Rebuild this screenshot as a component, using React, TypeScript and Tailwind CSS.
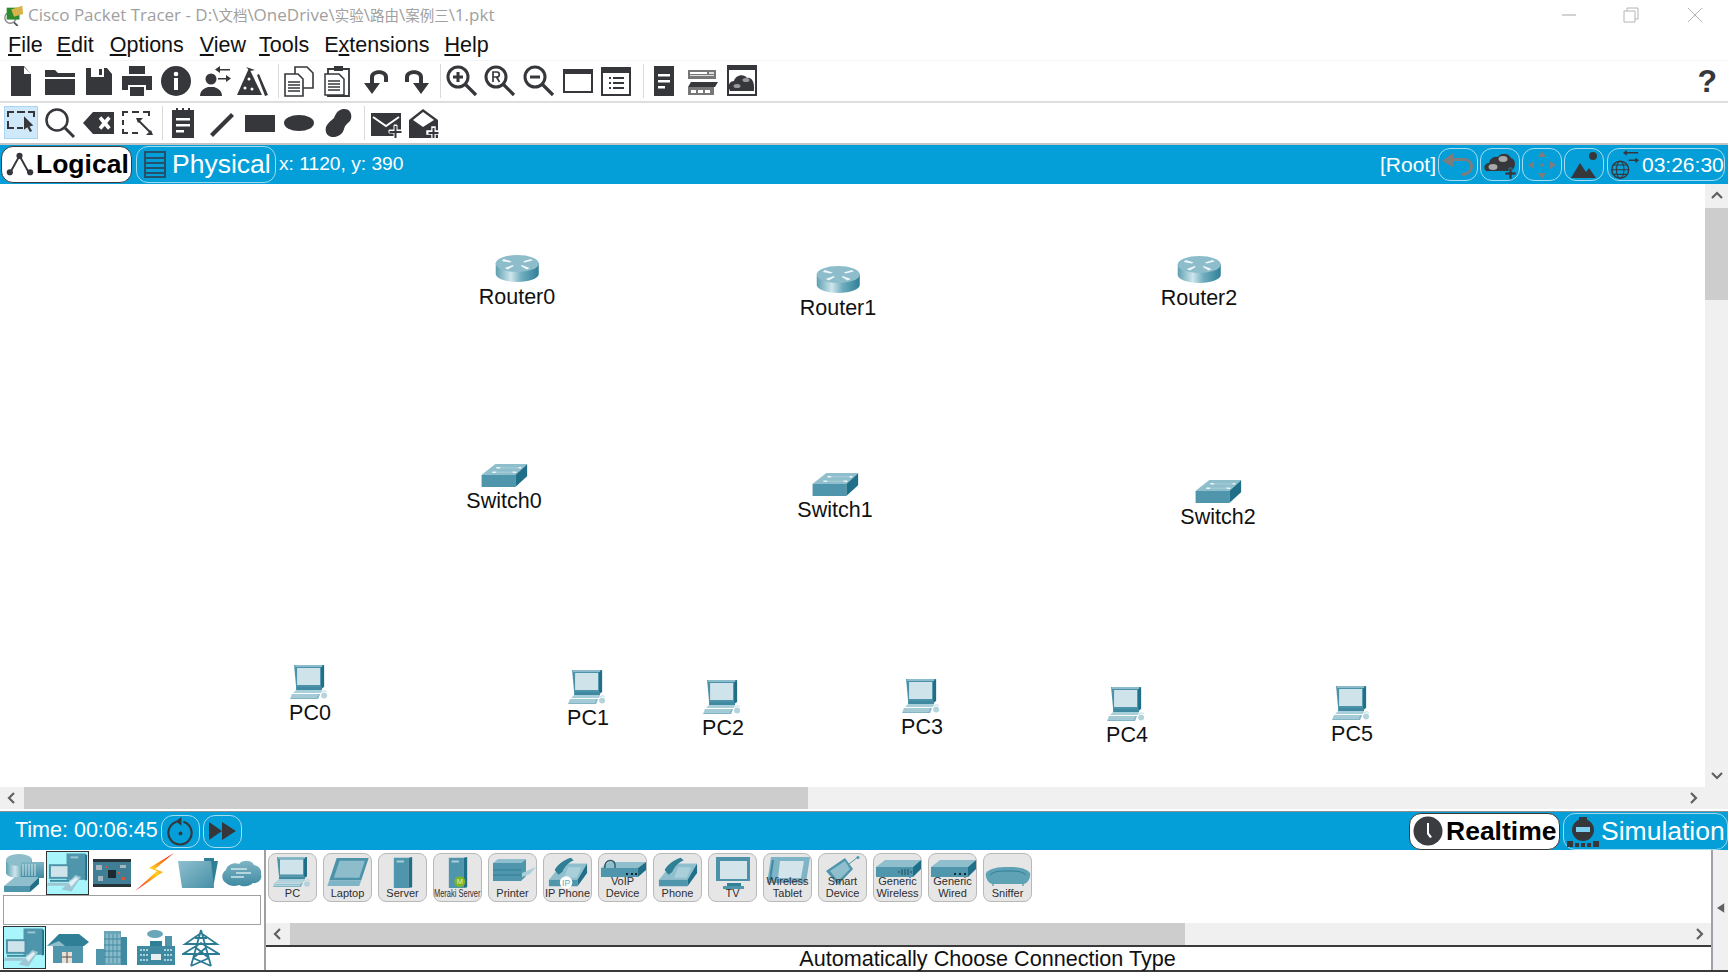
import React from "react";

const DARK = "#36373b";
const FONT = "font-['Liberation_Sans',Arial,sans-serif]";

function Defs() {
  return (
    <svg className="absolute w-0 h-0">
      <defs>
        <linearGradient id="rside" x1="0" x2="1" y1="0" y2="0">
          <stop offset="0" stopColor="#5d9fb1" />
          <stop offset="0.35" stopColor="#cfe6ec" />
          <stop offset="0.6" stopColor="#6fadbf" />
          <stop offset="1" stopColor="#2f7f97" />
        </linearGradient>
        <linearGradient id="teal" x1="0" x2="1" y1="0" y2="1">
          <stop offset="0" stopColor="#8fc0cf" />
          <stop offset="1" stopColor="#468fa6" />
        </linearGradient>
        <linearGradient id="tealV" x1="0" x2="0" y1="0" y2="1">
          <stop offset="0" stopColor="#7eb5c6" />
          <stop offset="1" stopColor="#3f8aa1" />
        </linearGradient>
        <linearGradient id="bolt" x1="0" x2="1" y1="1" y2="0">
          <stop offset="0" stopColor="#f01010" />
          <stop offset="0.5" stopColor="#ffd21f" />
          <stop offset="1" stopColor="#f01010" />
        </linearGradient>
      </defs>
    </svg>
  );
}

// canvas and palette devices
function RouterIcon({ className = "w-[45px] h-[29px]" }: { className?: string }) {
  return (
    <svg viewBox="0 0 45 29" className={className}>
      <path d="M1 9v11c0 4 9 8 21.500 8S44 24 44 20V9z" fill="url(#rside)" />
      <ellipse cx="22.500" cy="9.500" rx="21.500" ry="8.500" fill="#8dbccb" />
      <path d="M9 5l8 2.500-2 1L7 7zM36 5l-8 2.500 2 1 8-2zM10 14l8-3 1 1-6 3.500zM35 14l-8-3-1 1 6 3.500z" fill="#eef7f9" />
    </svg>
  );
}

function SwitchIcon() {
  return (
    <svg viewBox="0 0 46 23" className="w-[46px] h-[23px]">
      <path d="M0 11L14 0h32L34 11z" fill="#8fbfcd" />
      <path d="M0 11h34v12H0z" fill="#4f95ab" />
      <path d="M34 11L46 0v12L34 23z" fill="#1f6f88" />
      <path d="M15 3h4v1.500h-4zM37 3h3v1.500h-3zM11 7.500h4V9h-4zM31 7.500h4V9h-4z" fill="#eef7f9" />
      <path d="M18 3.800h20M14 8.200h18" stroke="#b5d6df" strokeWidth="0.700" />
    </svg>
  );
}

function PcIcon({ className = "w-[40px] h-[35px]" }: { className?: string }) {
  return (
    <svg viewBox="0 0 40 35" preserveAspectRatio="none" className={className}>
      <path d="M4 1h30v22H6z" fill="#4c93a9" />
      <path d="M34 1l0 22-3 2V3z" fill="#1f6f88" />
      <path d="M5 1h27v2H5z" fill="#8bbccb" />
      <path d="M7 4h23v17H7z" fill="#cfe3ea" />
      <path d="M6 23h26v3H6z" fill="#3f8aa1" />
      <path d="M6 26h26l-1 3H3z" fill="#a9cfda" />
      <path d="M2 30h28l-2 5H0z" fill="#82b6c6" />
      <path d="M2 31h26M1 33h26" stroke="#e6f2f5" strokeWidth="0.700" />
      <path d="M32 28c2-2 4-1 5 0" stroke="#b8d6df" fill="none" />
      <ellipse cx="34" cy="31.500" rx="3" ry="3" fill="#b5d3dc" />
    </svg>
  );
}

function Canvas() {
  const nodes = [
    { name: "Router0", kind: "router", pos: "left-[517px] top-[70px]" },
    { name: "Router1", kind: "router", pos: "left-[838px] top-[81px]" },
    { name: "Router2", kind: "router", pos: "left-[1199px] top-[71px]" },
    { name: "Switch0", kind: "switch", pos: "left-[504px] top-[280px]" },
    { name: "Switch1", kind: "switch", pos: "left-[835px] top-[289px]" },
    { name: "Switch2", kind: "switch", pos: "left-[1218px] top-[296px]" },
    { name: "PC0", kind: "pc", pos: "left-[310px] top-[480px]" },
    { name: "PC1", kind: "pc", pos: "left-[588px] top-[485px]" },
    { name: "PC2", kind: "pc", pos: "left-[723px] top-[495px]" },
    { name: "PC3", kind: "pc", pos: "left-[922px] top-[494px]" },
    { name: "PC4", kind: "pc", pos: "left-[1127px] top-[502px]" },
    { name: "PC5", kind: "pc", pos: "left-[1352px] top-[501px]" },
  ];
  return (
    <div className="relative flex-1 bg-white">
      {nodes.map((n) => (
        <div key={n.name} className={`absolute -translate-x-1/2 flex flex-col items-center ${n.pos}`}>
          {n.kind === "router" && <RouterIcon />}
          {n.kind === "switch" && <SwitchIcon />}
          {n.kind === "pc" && <PcIcon />}
          <span className="mt-[2px] text-[21.500px] leading-[24px] text-[#111]">{n.name}</span>
        </div>
      ))}
    </div>
  );
}

// toolbar glyphs
function Glyph({ children }: { children: React.ReactNode }) {
  return (
    <svg viewBox="0 0 32 32" className="w-[32px] h-[32px]" fill={DARK}>
      {children}
    </svg>
  );
}

const toolbarGlyphs: Record<string, React.ReactNode> = {
  newFile: <path d="M6 1h13l7 8v22H6zM19 2v7h7" />,
  open: (
    <>
      <path d="M1 5h10l3 3h17v4H1z" />
      <path d="M1 14h30v16H1z" />
    </>
  ),
  save: (
    <>
      <path d="M3 3h5v9h13V3h3l5 6v21H3z" />
      <path d="M16 4h3v6h-3z" />
    </>
  ),
  print: (
    <>
      <path d="M8 1h16v8H8z" />
      <path d="M1 11h30v14h-6v-5H7v5H1z" />
      <path d="M9 22h14v9H9z" />
    </>
  ),
  info: (
    <>
      <circle cx="16" cy="16" r="15" />
      <circle cx="16" cy="9" r="2.300" fill="#fff" />
      <path d="M14 13h4v12h-4z" fill="#fff" />
    </>
  ),
  user: (
    <>
      <circle cx="12" cy="14" r="5.500" />
      <path d="M1 31c0-6 5-8 8-9h6c3 1 8 3 8 9z" />
      <path d="M19 4h12v1.500H19zM19 13h9v1.500h-9z" />
      <path d="M21 1v7l-5-3.500zM27 10v7l5-3.500z" />
    </>
  ),
  pyramid: (
    <>
      <path d="M12 3l13 27H0z" />
      <path d="M9 2l9 3-5 1z" />
      <circle cx="12" cy="14" r="1.500" fill="#fff" />
      <circle cx="8" cy="23" r="1.500" fill="#fff" />
      <circle cx="15" cy="24" r="1.500" fill="#fff" />
      <path d="M20 10l2-1 9 21-3 1z" />
    </>
  ),
  copy: (
    <>
      <path d="M12 2h12l6 6v15H12z" fill="#fff" stroke={DARK} strokeWidth="1.600" />
      <path d="M2 9h13l5 5v17H2z" fill="#fff" stroke={DARK} strokeWidth="1.600" />
      <path d="M5 17h12M5 20h12M5 23h12M5 26h12" stroke={DARK} strokeWidth="1.500" />
    </>
  ),
  paste: (
    <>
      <path d="M6 4h21v27H6z" fill="#fff" stroke={DARK} strokeWidth="1.800" />
      <path d="M12 1h9v5h-9z" />
      <path d="M3 9h14l5 5v16H3z" fill="#fff" stroke={DARK} strokeWidth="1.500" />
      <path d="M6 16h12M6 19h12M6 22h12M6 25h12" stroke={DARK} strokeWidth="1.500" />
    </>
  ),
  undo: (
    <path d="M8 18v-6C8 3 26 3 26 12v5h-4v-5c0-4-10-4-10 0v6h6l-8 11-8-11z" />
  ),
  redo: (
    <path d="M22 18v-6C22 3 4 3 4 12v5h4v-5c0-4 10-4 10 0v6h-6l8 11 8-11z" />
  ),
  zoomIn: (
    <>
      <circle cx="12" cy="12" r="10" fill="none" stroke={DARK} strokeWidth="3" />
      <path d="M19 19l11 11" stroke={DARK} strokeWidth="3.200" />
      <path d="M7 10.500h10v3H7zM10.500 7h3v10h-3z" />
    </>
  ),
  zoomR: (
    <>
      <circle cx="12" cy="12" r="10" fill="none" stroke={DARK} strokeWidth="3" />
      <path d="M19 19l11 11" stroke={DARK} strokeWidth="3.200" />
      <path d="M9 17V7h4c3 0 3 5 0 5H9M12.500 12l3 5" fill="none" stroke={DARK} strokeWidth="1.700" />
    </>
  ),
  zoomOut: (
    <>
      <circle cx="12" cy="12" r="10" fill="none" stroke={DARK} strokeWidth="3" />
      <path d="M19 19l11 11" stroke={DARK} strokeWidth="3.200" />
      <path d="M7 10.500h10v3H7z" />
    </>
  ),
  windowIcon: (
    <>
      <path d="M2 5h28v22H2z" fill="#fff" stroke={DARK} strokeWidth="2" />
      <path d="M2 5h28v4H2z" />
    </>
  ),
  listWindow: (
    <>
      <path d="M2 3h28v27H2z" fill="#fff" stroke={DARK} strokeWidth="2" />
      <path d="M2 3h28v5H2z" />
      <path d="M9 12h2v2H9zM13 12h11v2H13zM9 17h2v2H9zM13 17h11v2H13zM9 22h2v2H9zM13 22h11v2H13z" />
    </>
  ),
  darkNote: (
    <>
      <path d="M6 1h20v30H6z" />
      <path d="M10 9h12v2.500H10zM10 15h12v2.500H10zM10 21h7v2.500h-7z" fill="#fff" />
    </>
  ),
  devices: (
    <>
      <path d="M1 5h28v9H1z" fill="#777" />
      <path d="M3 7h17v2H3z" fill="#fff" />
      <path d="M22 7h5v2h-5zM3 10h24v1H3z" fill="#ddd" />
      <path d="M4 17h27l-3 5H1z" />
      <path d="M1 22h26v8H1z" fill="#777" />
      <path d="M4 25h5v3H4zM11 25h5v3h-5zM18 25h5v3h-5z" fill="#fff" />
    </>
  ),
  cloudWindow: (
    <>
      <path d="M2 1h28v29H2z" fill="#fff" stroke={DARK} strokeWidth="2" />
      <path d="M2 1h28v4H2z" />
      <path d="M4 26c-3-6 0-10 4-10 1-6 10-8 13-3 4-1 8 3 7 13z" />
      <ellipse cx="20" cy="15" rx="3.500" ry="2" fill="#999" />
      <ellipse cx="11" cy="21" rx="3.500" ry="2" fill="#999" />
    </>
  ),
  select: (
    <>
      <path d="M2 4h7v2H4v4H2zM12 4h8v2h-8zM23 4h7v6h-2V6h-5zM2 14h2v6h5v2H2zM12 20h6v2h-6z" />
      <path d="M20 12l11 11-4.500 1 3 5.500-2.500 1-3-5.500-4 3z" transform="translate(2 -1) scale(0.85)" />
    </>
  ),
  search: (
    <>
      <circle cx="13" cy="13" r="10.500" fill="none" stroke={DARK} strokeWidth="2.500" />
      <path d="M21 21l9 9" stroke={DARK} strokeWidth="3" />
    </>
  ),
  del: (
    <>
      <path d="M10 5h21v22H10L0 16z" />
      <path d="M15 11l3-3 4 4.500L26 8l3 3-4 5 4 5-3 3-4-4.500L18 24l-3-3 4-5z" fill="#fff" transform="translate(3 2.400) scale(0.85)" />
    </>
  ),
  resize: (
    <>
      <path d="M1 4h6v2H3v3H1zM11 4h7v2h-7zM22 4h7v5h-2V6h-5zM1 13h2v5H1zM1 22h2v3h4v2H1zM11 25h6v2h-6z" />
      <path d="M17 13l13 13" stroke={DARK} strokeWidth="2" />
      <path d="M15 11h7l-5 5zM32 28h-7l5-5z" />
    </>
  ),
  note: (
    <>
      <path d="M5 3h22v28H5z" />
      <path d="M9 1h2v5H9zM15 1h2v5h-2zM21 1h2v5h-2z" />
      <path d="M9 11h14v2.500H9zM9 17h14v2.500H9zM9 23h8v2.500H9z" fill="#fff" />
    </>
  ),
  line: <path d="M4 27L25 6l3 3L7 30z" />,
  rect: <path d="M1 8h30v17H1z" />,
  ellipse: <ellipse cx="16" cy="16" rx="15" ry="8" />,
  free: <path d="M21 2c8-1 10 7 7 12-3 3-5 4-6 8-2 9-16 11-18 3-2-7 5-11 8-14 2-5 4-8 9-9z" />,
  mail: (
    <>
      <path d="M1 6h30v17h-6v6H1z" />
      <path d="M3 10l13 9 13-9" fill="none" stroke="#fff" strokeWidth="2" />
      <path d="M24 18h3v5h5v3h-5v5h-3v-5h-5v-3h5z" fill="#fff" stroke="#fff" strokeWidth="1" />
      <path d="M24.500 19h2v5h5v2h-5v5h-2v-5h-5v-2h5z" />
    </>
  ),
  mailOpen: (
    <>
      <path d="M1 13L15 2l15 11v18H1z" />
      <path d="M5 13l10-8 11 8-11 7z" fill="#fff" />
      <path d="M24 20h3v4h4v3h-4v5h-3v-5h-5v-3h5z" fill="#fff" stroke="#fff" strokeWidth="1.500" />
      <path d="M24.500 21h2v4h4v2h-4v4h-2v-4h-4v-2h4z" />
    </>
  ),
};

function ToolIcon({ id, active }: { id: string; active?: boolean }) {
  return (
    <div className="w-[38.7px] h-[34px] flex items-center justify-center shrink-0">
      <div className={active ? "w-[34px] h-[33px] flex items-center justify-center bg-[#cfe8fa] border border-[#a9d6f5]" : "flex items-center justify-center"}>
        <Glyph>{toolbarGlyphs[id]}</Glyph>
      </div>
    </div>
  );
}

function Separator({ className }: { className: string }) {
  return <div className={`w-px h-[34px] bg-[#d9d9d9] shrink-0 ${className}`} />;
}

function Toolbars() {
  return (
    <>
      <div className="h-[43px] flex items-center pl-[2px] pr-[5px] border-t border-[#f4f4f4] border-b-2 border-b-[#dedede]">
        {["newFile", "open", "save", "print", "info", "user", "pyramid"].map((i) => <ToolIcon key={i} id={i} />)}
        <Separator className="ml-[5px] mr-px" />
        <div className="flex gap-[0.6px]">
          {["copy", "paste", "undo", "redo"].map((i) => <ToolIcon key={i} id={i} />)}
        </div>
        <Separator className="ml-[4px] mr-px" />
        {["zoomIn", "zoomR", "zoomOut", "windowIcon", "listWindow"].map((i) => <ToolIcon key={i} id={i} />)}
        <Separator className="ml-[7px] mr-px" />
        {["darkNote", "devices", "cloudWindow"].map((i) => <ToolIcon key={i} id={i} />)}
        <span className="ml-auto text-[32px] font-bold leading-none text-[#36373b] pr-[6px]">?</span>
      </div>
      <div className="h-[42px] flex items-center pl-[2px] pb-[1px] border-b-2 border-b-[#c4c4c4]">
        <ToolIcon id="select" active />
        {["search", "del", "resize"].map((i) => <ToolIcon key={i} id={i} />)}
        <Separator className="ml-[5px] mr-px" />
        {["note", "line", "rect", "ellipse", "free"].map((i) => <ToolIcon key={i} id={i} />)}
        <Separator className="ml-[7px] mr-px" />
        {["mail", "mailOpen"].map((i) => <ToolIcon key={i} id={i} />)}
      </div>
    </>
  );
}

function TabButton({ active, children, className }: { active?: boolean; children: React.ReactNode; className: string }) {
  return (
    <div
      className={`flex items-center rounded-[12px] border text-[26.500px] leading-none ${
        active ? "bg-white border-[#3a3a3a] text-black font-bold" : "border-[#9fd9ee] text-white"
      } ${className}`}
    >
      {children}
    </div>
  );
}

function PillButton({ children, className = "w-[40px]" }: { children: React.ReactNode; className?: string }) {
  return (
    <div className={`h-[33px] flex items-center justify-center rounded-[12px] border border-[#a6dcf0] shrink-0 ${className}`}>
      {children}
    </div>
  );
}

function LogicalBar() {
  return (
    <div className="h-[39px] bg-[#049fd9] flex items-center text-white pl-px shrink-0">
      <TabButton active className="w-[131px] h-[37px] pl-[3px] gap-[2px]">
        <svg viewBox="0 0 30 30" className="w-[29px] h-[29px]">
          <path d="M5 24L15 6l10 18" fill="none" stroke={DARK} strokeWidth="2" />
          <circle cx="5" cy="23" r="3.200" fill={DARK} />
          <circle cx="15" cy="6" r="3.200" fill={DARK} />
          <circle cx="26" cy="23" r="3.200" fill={DARK} />
        </svg>
        Logical
      </TabButton>
      <TabButton className="w-[140px] h-[37px] ml-[4px] pl-[7px] gap-[6px]">
        <svg viewBox="0 0 22 27" className="w-[22px] h-[27px]">
          <path d="M1 1h20v25H1z" fill="none" stroke="#24506a" strokeWidth="2" />
          <path d="M1 7h20M1 12h20M1 17h20M1 22h20" stroke="#24506a" strokeWidth="2" />
        </svg>
        Physical
      </TabButton>
      <span className="ml-[3px] text-[19.200px]">x: 1120, y: 390</span>
      <span className="ml-auto text-[21px]">[Root]</span>
      <div className="flex items-center gap-[2px] ml-[2px] pr-[3px]">
        <PillButton>
          <svg viewBox="0 0 34 28" className="w-[34px] h-[28px]">
            <path d="M1 10l11-8v5h10c8 0 10 5 10 8 0 6-5 10-11 10v-3c5 0 8-3 8-7 0-3-2-5-7-5H12v6z" fill="#7d7d7d" />
          </svg>
        </PillButton>
        <PillButton>
          <svg viewBox="0 0 34 30" className="w-[34px] h-[30px]">
            <path d="M3 21c-4-4 0-8 3-8 1-6 7-7 9-6 3-5 11-4 13 1 4 1 5 6 3 10l-2 3H5z" fill={DARK} />
            <ellipse cx="20" cy="9" rx="4.500" ry="3" fill="#a8a8a8" />
            <ellipse cx="10" cy="17" rx="4.500" ry="3" fill="#a8a8a8" />
            <path d="M26 18h3v4h4v3h-4v4h-3v-4h-4v-3h4z" fill={DARK} stroke="#049fd9" strokeWidth="0.700" />
          </svg>
        </PillButton>
        <PillButton>
          <svg viewBox="0 0 30 30" className="w-[30px] h-[30px]" fill="#7d7d7d">
            <path d="M15 1l4 6h-8zM15 29l-4-6h8zM1 15l6-4v8zM29 15l-6 4v-8z" />
            <rect x="13.500" y="13.500" width="3" height="3" />
          </svg>
        </PillButton>
        <PillButton>
          <svg viewBox="0 0 30 30" className="w-[30px] h-[30px]" fill={DARK}>
            <circle cx="24" cy="6" r="4" />
            <path d="M2 28L11 13l6 9 3-4 7 10z" />
          </svg>
        </PillButton>
        <PillButton className="w-[118px] ml-[1px] justify-start gap-[3px] pl-[1px]">
          <svg viewBox="0 0 32 32" className="w-[30px] h-[30px]" fill="none" stroke={DARK}>
            <circle cx="12" cy="21" r="9" strokeWidth="1.500" />
            <ellipse cx="12" cy="21" rx="4" ry="9" strokeWidth="1.200" />
            <path d="M3 21h18M4 16h16M4 26h16" strokeWidth="1.200" />
            <path d="M18 3h13M21 11h9" strokeWidth="1.500" />
            <path d="M19 0v6l-4-3zM28 8v6l4-3z" fill={DARK} stroke="none" />
          </svg>
          <span className="text-[21px]">03:26:30</span>
        </PillButton>
      </div>
    </div>
  );
}

function Chevron({ dir, className = "" }: { dir: "left" | "right" | "up" | "down"; className?: string }) {
  const d = {
    left: "M9 2L4 7l5 5",
    right: "M5 2l5 5-5 5",
    up: "M2 9l5-5 5 5",
    down: "M2 5l5 5 5-5",
  }[dir];
  return (
    <svg viewBox="0 0 14 14" className={`w-[14px] h-[14px] shrink-0 ${className}`}>
      <path d={d} fill="none" stroke="#606060" strokeWidth="2.200" />
    </svg>
  );
}

function HScroll({ thumb, className }: { thumb: string; className: string }) {
  return (
    <div className={`bg-[#f0f0f0] flex items-center shrink-0 ${className}`}>
      <div className="w-[24px] flex justify-center shrink-0">
        <Chevron dir="left" />
      </div>
      <div className="flex-1 h-full">
        <div className={`h-full bg-[#cdcdcd] ${thumb}`} />
      </div>
      <div className="w-[24px] flex justify-center shrink-0">
        <Chevron dir="right" />
      </div>
    </div>
  );
}

function TimeBar() {
  return (
    <div className="h-[39px] bg-[#049fd9] border-t border-[#8a8f94] flex items-center text-white pl-[15px] shrink-0">
      <span className="text-[21.500px] mb-[2px]">Time: 00:06:45</span>
      <PillButton className="w-[39px] ml-[3px]">
        <svg viewBox="0 0 30 30" className="w-[29px] h-[29px]">
          <path d="M11 5a12 12 0 1 0 7 0" fill="none" stroke={DARK} strokeWidth="2.200" />
          <path d="M16 0v9l-6-4.500z" fill={DARK} />
          <circle cx="15" cy="17" r="2" fill={DARK} />
        </svg>
      </PillButton>
      <PillButton className="w-[39px] ml-[3px]">
        <svg viewBox="0 0 30 24" className="w-[30px] h-[24px]" fill={DARK}>
          <path d="M2 3l13 9-13 9zM15 3l14 9-14 9z" />
        </svg>
      </PillButton>
      <TabButton active className="w-[151px] h-[37px] ml-auto pl-[3px] gap-[3px]">
        <svg viewBox="0 0 30 30" className="w-[30px] h-[30px]">
          <circle cx="15" cy="15" r="14.500" fill="#3b3c40" />
          <path d="M14 7h2v10l3 4-2 1-3-4z" fill="#fff" />
        </svg>
        Realtime
      </TabButton>
      <TabButton className="w-[165px] h-[37px] ml-[3px] pl-[3px] gap-[2px]">
        <svg viewBox="0 0 32 32" className="w-[32px] h-[32px]">
          <path d="M12 2h8v3h-8z" fill={DARK} />
          <circle cx="16" cy="15" r="11" fill={DARK} />
          <path d="M9 12h14v5H9z" fill="#7fd0ee" />
          <path d="M0 26h6v6H0zM8 28h4v4H8zM14 28h4v4h-4zM20 28h4v4h-4zM26 26h6v6h-6z" fill={DARK} />
        </svg>
        Simulation
      </TabButton>
    </div>
  );
}

const categoryIcons: React.ReactNode[] = [
  <svg key="net" viewBox="0 0 42 40" className="w-[42px] h-[40px]">
    <path d="M2 7v13c0 3 7 5 13 5s13-2 13-5V7z" fill="url(#rside)" />
    <ellipse cx="15" cy="7" rx="13" ry="6" fill="#8dbccb" />
    <path d="M17 9h23v16H17z" fill="url(#tealV)" />
    <path d="M19 11v12M22 11v12M25 11v12M28 11v12M31 11v12" stroke="#cfe3ea" />
    <path d="M0 33l11-9h24l-9 9z" fill="#8fbfcd" />
    <path d="M0 33h26v6H0z" fill="#4f95ab" />
    <path d="M26 33l9-9v7l-9 8z" fill="#1f6f88" />
  </svg>,
  <EndDevices key="end" />,
  <svg key="board" viewBox="0 0 38 28" className="w-[38px] h-[28px]">
    <path d="M0 0h38v28H0z" fill="#3f7e94" />
    <path d="M0 0h38v3H0zM0 25h38v3H0z" fill="#26343a" />
    <path d="M15 11h8v8h-8z" fill="#1c2a30" />
    <path d="M3 6h6v5H3zM27 6h6v3h-6zM5 17h5v5H5z" fill="#a6b6bc" />
    <path d="M12 7h2v2h-2zM25 13h2v2h-2zM29 18h3v3h-3z" fill="#d0563c" />
  </svg>,
  <svg key="bolt" viewBox="0 0 40 40" className="w-[40px] h-[40px]">
    <path d="M39 0L14 15l8 3L0 38l28-19-8-3z" fill="url(#bolt)" />
  </svg>,
  <svg key="folder" viewBox="0 0 40 30" className="w-[40px] h-[30px]">
    <path d="M26 0h10v3h4l-5 27h-8z" fill="#2f7f97" />
    <path d="M0 3h33l3 27H4z" fill="url(#teal)" />
  </svg>,
  <svg key="cloud" viewBox="0 0 40 28" className="w-[40px] h-[28px]">
    <path d="M4 24C-1 21-1 14 4 11c1-6 9-8 13-6 4-5 13-4 15 1 5 1 8 5 7 9 2 6-4 10-8 9-4 4-10 4-14 2-4 2-10 1-13-2z" fill="url(#tealV)" />
    <path d="M9 10h16M14 14h15M9 18h13" stroke="#d2e6ec" strokeWidth="1.400" />
  </svg>,
];

function EndDevices() {
  return (
    <svg viewBox="0 0 42 40" className="w-[42px] h-[40px]">
      <path d="M20 0h19v27H20z" fill="#4f95ab" />
      <path d="M39 0l2 2v25l-2 1z" fill="#1f6f88" />
      <path d="M24 3h8v2h-8z" fill="#9cc6d3" />
      <path d="M2 11h21v15H2z" fill="#4c93a9" />
      <path d="M4 13h17v11H4z" fill="#cfe3ea" />
      <path d="M3 27h20v2H3z" fill="#3f8aa1" />
      <path d="M1 30h20l-2 3H0z" fill="#9cc6d3" />
      <path d="M29 22l6 2-10 15-10-2z" fill="#9cc6d3" />
      <path d="M22 30l8-6 2 2-7 8z" fill="#e1eff3" />
    </svg>
  );
}

const subCategoryIcons: React.ReactNode[] = [
  <svg key="home" viewBox="0 0 42 32" className="w-[42px] h-[32px]">
    <path d="M6 14h30v17H6z" fill="#4f95ab" />
    <path d="M0 14L12 2h20l10 8-5 4z" fill="#2f7f97" />
    <path d="M0 14l12-5 6 5z" fill="#8fbfcd" />
    <path d="M15 20h10v11H15z" fill="#e7e1d8" />
    <path d="M20 20v11M15 25h10" stroke="#5a4a40" />
  </svg>,
  <svg key="city" viewBox="0 0 32 34" className="w-[32px] h-[34px]">
    <path d="M8 0h17v34H8z" fill="#6aa5b8" />
    <path d="M25 6h6v28h-6z" fill="#3f8aa1" />
    <path d="M0 18h9v16H0z" fill="#4f95ab" />
    <path d="M11 3v29M15 3v29M19 3v29M23 3v29" stroke="#a9cfda" />
    <path d="M8 8h17M8 14h17M8 20h17M8 26h17" stroke="#3f8aa1" />
  </svg>,
  <svg key="factory" viewBox="0 0 40 36" className="w-[40px] h-[36px]">
    <ellipse cx="19" cy="4" rx="8" ry="4" fill="#6aa5b8" />
    <path d="M29 6h7v12h-7z" fill="#4f95ab" />
    <path d="M1 16h38v19H1z" fill="#3f8aa1" />
    <path d="M14 11h12v5H14z" fill="#2f7f97" />
    <path d="M15 24h10v6H15z" fill="#e7eef0" />
    <path d="M4 20h8M4 25h8M4 30h8M28 20h8M28 25h8M28 30h8" stroke="#a9cfda" strokeWidth="2" strokeDasharray="2 1" />
  </svg>,
  <svg key="tower" viewBox="0 0 38 38" className="w-[38px] h-[38px]" fill="none" stroke="#2a7b93" strokeWidth="1.800">
    <path d="M19 1L9 37M19 1l10 36M13 9h12M3 15h32L19 4zM1 25h36L19 14zM11 29l14-11M27 29L13 18M9 37l18-8M29 37L11 29" />
  </svg>,
];

const devices = [
  { label: ["PC"], icon: "pc" },
  { label: ["Laptop"], icon: "laptop" },
  { label: ["Server"], icon: "server" },
  { label: ["Meraki Server"], icon: "meraki", squeeze: true },
  { label: ["Printer"], icon: "printer" },
  { label: ["IP Phone"], icon: "ipphone" },
  { label: ["VoIP", "Device"], icon: "voip" },
  { label: ["Phone"], icon: "phone" },
  { label: ["TV"], icon: "tv" },
  { label: ["Wireless", "Tablet"], icon: "tablet" },
  { label: ["Smart", "Device"], icon: "smart" },
  { label: ["Generic", "Wireless"], icon: "genw" },
  { label: ["Generic", "Wired"], icon: "wired" },
  { label: ["Sniffer"], icon: "sniffer" },
];

function DeviceGlyph({ icon }: { icon: string }) {
  switch (icon) {
    case "pc":
      return <PcIcon className="w-[40px] h-[31px]" />;
    case "laptop":
      return (
        <svg viewBox="0 0 44 34" className="w-[42px] h-[32px]">
          <path d="M10 2h34l-8 24H2z" fill="#4c93a9" />
          <path d="M13 5h27l-6 18H7z" fill="#8dbccb" />
          <path d="M2 26h34l-2 6H0z" fill="#7eb5c6" />
        </svg>
      );
    case "server":
    case "meraki":
      return (
        <svg viewBox="0 0 24 36" className="w-[22px] h-[33px] overflow-visible">
          <path d="M2 2h16v33H2z" fill="#4f95ab" />
          <path d="M18 2l4-1v33l-4 1z" fill="#1f6f88" />
          <path d="M5 5h8v2H5z" fill="#a9cfda" />
          {icon === "meraki" && (
            <>
              <circle cx="14" cy="28" r="6" fill="#7ab52c" />
              <text x="14" y="31" textAnchor="middle" fontSize="8" fill="#e7f3cf">M</text>
            </>
          )}
        </svg>
      );
    case "printer":
      return (
        <svg viewBox="0 0 46 30" className="w-[46px] h-[30px]">
          <path d="M3 7h28l5-4v17l-5 5H3z" fill="#4f95ab" />
          <path d="M3 7h28l5-4H8z" fill="#8fbfcd" />
          <path d="M3 14h28M3 19h28" stroke="#2f7f97" />
          <path d="M32 17l14-6-6 7-8 3z" fill="#a9cfda" />
        </svg>
      );
    case "ipphone":
    case "phone":
      return (
        <svg viewBox="0 0 44 32" className="w-[42px] h-[32px] overflow-visible">
          <path d="M2 24L16 7h26L32 24z" fill="#8fbfcd" />
          <path d="M2 24h30v7H2z" fill="#4f95ab" />
          <path d="M32 24L42 7v10l-10 14z" fill="#1f6f88" />
          <path d="M8 14c3-6 10-11 17-13l3 3c-6 2-10 7-12 12l-4 3z" fill="#2f7f97" />
          <path d="M22 11h14l-5 11H18z" fill="#a9cfda" />
          {icon === "ipphone" && (
            <>
              <circle cx="20" cy="27" r="6.500" fill="#fff" />
              <text x="20" y="30.500" textAnchor="middle" fontSize="9" fill="#6aa5b8">IP</text>
            </>
          )}
        </svg>
      );
    case "voip":
      return (
        <svg viewBox="0 0 46 22" className="w-[46px] h-[22px] overflow-visible">
          <path d="M1 12l8-6h37l-8 6z" fill="#8fbfcd" />
          <path d="M1 12h37v9H1z" fill="#4f95ab" />
          <path d="M38 12l8-6v8l-8 7z" fill="#1f6f88" />
          <path d="M26 17h2v2h-2zM31 17h2v2h-2zM35 17h2v2h-2z" fill="#123" />
          <path d="M5 12C3 3 17 1 15 12" fill="none" stroke="#2a5868" strokeWidth="1.500" />
        </svg>
      );
    case "tv":
      return (
        <svg viewBox="0 0 36 34" className="w-[36px] h-[34px]">
          <path d="M1 1h34v24H1z" fill="#4c93a9" />
          <path d="M5 5h27v18H5z" fill="#d3e5eb" />
          <path d="M12 27h14v3H12z" fill="#2f7f97" />
          <path d="M8 30h21v3H8z" fill="#4f95ab" />
        </svg>
      );
    case "tablet":
      return (
        <svg viewBox="0 0 44 28" className="w-[44px] h-[28px]">
          <path d="M5 1h39l-4 26H1z" fill="#7eb5c6" />
          <path d="M14 5h24l-3 17H12z" fill="#d3e5eb" />
          <path d="M7 4l-3 20" stroke="#3f8aa1" strokeWidth="2" />
        </svg>
      );
    case "smart":
      return (
        <svg viewBox="0 0 36 30" className="w-[36px] h-[30px]">
          <path d="M1 15L20 2l8 11-15 16z" fill="#4f95ab" />
          <path d="M5 15L20 5l5 8-12 12z" fill="#8fbfcd" />
          <path d="M24 8l9-7" stroke="#4f95ab" />
          <circle cx="33" cy="1.500" r="1.500" fill="#4f95ab" />
        </svg>
      );
    case "genw":
    case "wired":
      return (
        <svg viewBox="0 0 46 22" className="w-[46px] h-[22px]">
          <path d="M1 11l9-7h36l-8 7z" fill="#8fbfcd" />
          <path d="M1 11h37v10H1z" fill="#4f95ab" />
          <path d="M38 11l8-7v9l-8 8z" fill="#1f6f88" />
          {icon === "genw" ? (
            <path d="M27 13v6M30 13v6M33 13v6M24 15v2M36 15v2" stroke="#1e4a58" />
          ) : (
            <path d="M24 17h2v2h-2zM29 17h2v2h-2zM34 17h2v2h-2z" fill="#123" />
          )}
        </svg>
      );
    default:
      return (
        <svg viewBox="0 0 46 20" className="w-[46px] h-[20px] mt-[10px]">
          <path d="M1 7C5 2 13 1 23 1s18 1 22 6c1 4-2 10-6 11H7C3 17 0 11 1 7z" fill="#5fa2b6" />
          <path d="M5 9C9 5 15 5 23 5s14 0 18 4" stroke="#2f7f97" fill="none" />
          <path d="M8 18v2M38 18v2" stroke="#2f7f97" />
        </svg>
      );
  }
}

function DeviceButton({ d }: { d: (typeof devices)[number] }) {
  return (
    <div className="relative w-[49px] h-[49px] shrink-0 bg-[#e6e6e6] border border-[#b8b8b8] rounded-[8px] flex justify-center pt-[2px] overflow-hidden">
      <DeviceGlyph icon={d.icon} />
      <div className="absolute inset-x-0 bottom-[2px] flex flex-col items-center text-[11px] leading-[11.500px] text-[#2e2e2e] whitespace-nowrap">
        {d.label.map((l) => (
          <span key={l} className={d.squeeze ? "scale-x-[0.68]" : ""}>{l}</span>
        ))}
      </div>
    </div>
  );
}

function BottomPanel() {
  return (
    <div className="flex-1 flex border-b-2 border-[#3a3a3a] min-h-0">
      <div className="w-[266px] shrink-0 border-r-2 border-[#a0a0a4] flex flex-col">
        <div className="h-[45px] flex items-center pl-[3px] gap-0">
          <div className="w-[43px] flex justify-center">{categoryIcons[0]}</div>
          <div className="w-[43px] h-[44px] flex items-center justify-center bg-[#a8f5fb] border border-[#333]">{categoryIcons[1]}</div>
          <div className="w-[43px] flex justify-center ml-[1px]">{categoryIcons[2]}</div>
          <div className="w-[43px] flex justify-center">{categoryIcons[3]}</div>
          <div className="w-[44px] flex justify-center">{categoryIcons[4]}</div>
          <div className="w-[43px] flex justify-center">{categoryIcons[5]}</div>
        </div>
        <div className="h-[30px] mx-[3px] bg-white border border-[#a0a0a0]" />
        <div className="flex-1 flex items-center pl-[3px]">
          <div className="w-[43px] h-[43px] flex items-center justify-center bg-[#a8f5fb] border border-[#333]">
            <EndDevices />
          </div>
          <div className="w-[44px] flex justify-center">{subCategoryIcons[0]}</div>
          <div className="w-[43px] flex justify-center">{subCategoryIcons[1]}</div>
          <div className="w-[46px] flex justify-center">{subCategoryIcons[2]}</div>
          <div className="w-[43px] flex justify-center">{subCategoryIcons[3]}</div>
        </div>
      </div>
      <div className="flex-1 flex flex-col min-w-0">
        <div className="h-[73px] flex items-start pl-[2px] pt-[3px] gap-[6px]">
          {devices.map((d) => <DeviceButton key={d.label.join(" ")} d={d} />)}
        </div>
        <HScroll thumb="w-[895px]" className="h-[22px]" />
        <div className="flex-1 flex items-center justify-center border-t-2 border-[#3a3a3a] text-[21.600px] leading-none text-[#111] pr-[2px]">
          Automatically Choose Connection Type
        </div>
      </div>
      <div className="w-[17px] shrink-0 bg-[#f0f0f0] border-l-2 border-[#a0a0a8] flex flex-col items-center pt-[53px]">
        <svg viewBox="0 0 10 12" className="w-[8px] h-[10px]">
          <path d="M9 0v12L0 6z" fill="#606060" />
        </svg>
      </div>
    </div>
  );
}

export default function App() {
  return (
    <div className={`w-[1728px] h-[972px] bg-white flex flex-col overflow-hidden ${FONT}`}>
      <Defs />
      {/* title bar */}
      <div className="h-[30px] flex items-center shrink-0 relative">
        <svg viewBox="0 0 24 24" className="w-[22px] h-[22px] ml-[3px]">
          <circle cx="8" cy="15" r="6" fill="none" stroke="#888" strokeWidth="1.500" />
          <path d="M4 4h14v13H4z" fill="#2d8a2d" />
          <path d="M9 6l12-4 1 9-10 3z" fill="#d8b24a" />
          <path d="M12 20l4 4" stroke="#555" strokeWidth="2" />
        </svg>
        <span className="ml-[3px] text-[17px] text-[#a0a0a0] font-['Open_Sans','Noto_Sans_CJK_SC',sans-serif]">
          Cisco Packet Tracer - D:\<span className="text-[14.500px]">文档</span>\OneDrive\<span className="text-[14.500px]">实验</span>\<span className="text-[14.500px]">路由</span>\<span className="text-[14.500px]">案例三</span>\1.pkt
        </span>
        <div className="ml-auto flex items-center text-[#b0b0b0]">
          <svg viewBox="0 0 16 16" className="w-[16px] h-[16px] mr-[46px]">
            <path d="M1 8h14" stroke="#b4b4b4" strokeWidth="1.200" />
          </svg>
          <svg viewBox="0 0 16 16" className="w-[16px] h-[16px] mr-[48px]">
            <path d="M4 4V1h11v11h-3M1 4h11v11H1z" fill="none" stroke="#b4b4b4" />
          </svg>
          <svg viewBox="0 0 16 16" className="w-[16px] h-[16px] mr-[25px]">
            <path d="M1 1l14 14M15 1L1 15" stroke="#b4b4b4" />
          </svg>
        </div>
      </div>
      {/* menu */}
      <div className="h-[30px] flex items-center pl-[8px] text-[21.500px] text-[#111] shrink-0">
        <span><u>F</u>ile</span>
        <span className="ml-[14px]"><u>E</u>dit</span>
        <span className="ml-[16px]"><u>O</u>ptions</span>
        <span className="ml-[16px]"><u>V</u>iew</span>
        <span className="ml-[13px]"><u>T</u>ools</span>
        <span className="ml-[15px]">E<u>x</u>tensions</span>
        <span className="ml-[15px]"><u>H</u>elp</span>
      </div>
      <Toolbars />
      <LogicalBar />
      {/* workspace */}
      <div className="h-[603px] flex shrink-0">
        <Canvas />
        <div className="w-[23px] bg-[#f0f0f0] flex flex-col items-center shrink-0">
          <div className="h-[24px] flex items-center justify-center"><Chevron dir="up" /></div>
          <div className="w-full h-[92px] bg-[#cdcdcd]" />
          <div className="mt-auto h-[24px] flex items-center justify-center"><Chevron dir="down" /></div>
        </div>
      </div>
      <div className="flex shrink-0 pb-[2px] bg-white">
        <HScroll thumb="w-[784px]" className="w-[1705px] h-[22px]" />
        <div className="flex-1 bg-[#f0f0f0]" />
      </div>
      <TimeBar />
      <BottomPanel />
    </div>
  );
}
